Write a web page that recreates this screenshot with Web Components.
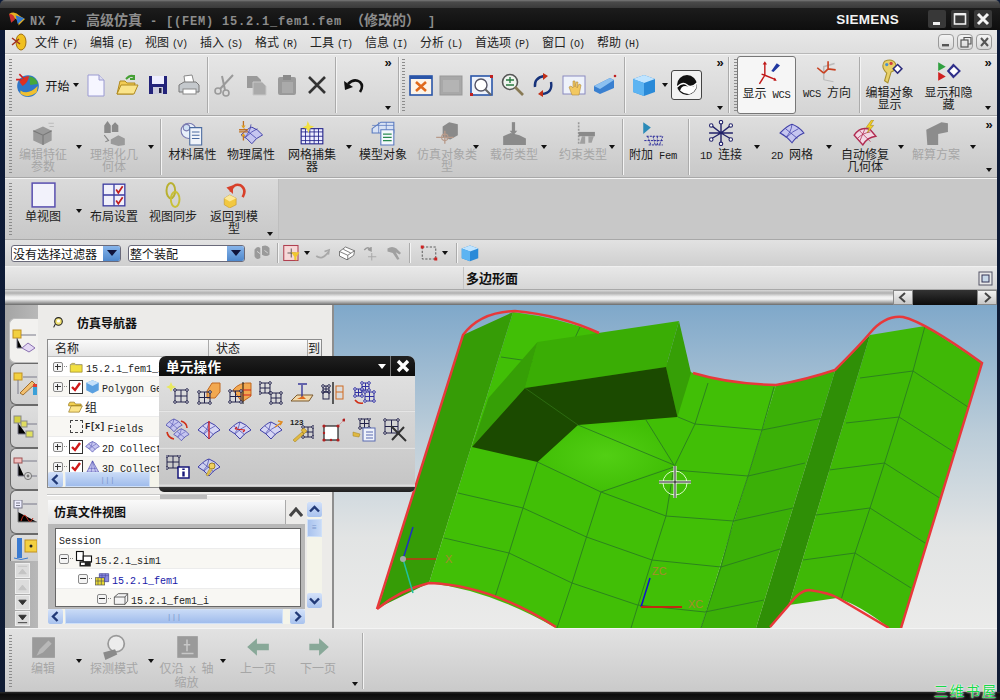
<!DOCTYPE html>
<html lang="zh">
<head>
<meta charset="utf-8">
<title>NX 7</title>
<style>
  html, body { margin: 0; padding: 0; background: #000; }
  body { font: 12px "Noto Sans CJK SC", "Liberation Sans", sans-serif; color: #1a1a1a; overflow: hidden; }
</style>
</head>
<body>

<nx-window>
  <nx-titlebar slot="title" text="NX 7 - 高级仿真 - [(FEM) 15.2.1_fem1.fem （修改的） ]"></nx-titlebar>
  <nx-menubar slot="menu" items="文件(F),编辑(E),视图(V),插入(S),格式(R),工具(T),信息(I),分析(L),首选项(P),窗口(O),帮助(H)"></nx-menubar>

  <nx-toolbar slot="bars" h="62" tone="a">
    <nx-grip></nx-grip>
    <nx-btn icon="start" w="66" size="26" text="开始" drop></nx-btn>
    <nx-btn icon="doc" w="31"></nx-btn><nx-btn icon="folder" w="31"></nx-btn><nx-btn icon="floppy" w="31"></nx-btn><nx-btn icon="printer" w="31"></nx-btn>
    <nx-sep style="margin:2px 1px 2px 3px"></nx-sep>
    <nx-btn icon="scissors" w="31"></nx-btn><nx-btn icon="copy" w="31"></nx-btn><nx-btn icon="paste" w="31"></nx-btn><nx-btn icon="del" w="30"></nx-btn>
    <nx-sep style="margin:2px 2px 2px 3px"></nx-sep>
    <nx-btn icon="undo" w="31"></nx-btn>
    <nx-more style="margin-left:12px"></nx-more>
    <nx-sep style="margin:2px 0 2px 3px"></nx-sep>
    <nx-grip style="margin-left:3px;margin-right:0"></nx-grip>
    <nx-btn icon="fit" w="31"></nx-btn><nx-btn icon="frame" w="30"></nx-btn><nx-btn icon="zoomwin" w="31"></nx-btn><nx-btn icon="zoom" w="31"></nx-btn><nx-btn icon="rotate" w="30"></nx-btn><nx-btn icon="pan" w="31"></nx-btn><nx-btn icon="persp" w="31"></nx-btn>
    <nx-sep style="margin:2px 5px 2px 4px"></nx-sep>
    <nx-btn icon="cube" w="28"></nx-btn><nx-btn w="13" drop></nx-btn>
    <nx-btn icon="shaded" w="31" boxed></nx-btn>
    <nx-more style="margin-left:11px"></nx-more>
    <nx-sep style="margin:2px 0 2px 1px"></nx-sep>
    <nx-grip style="margin-left:5px;margin-right:0"></nx-grip>
    <nx-tool icon="wcs" label="显示 WCS" w="59" active></nx-tool>
    <nx-tool icon="wcsdir" label="WCS 方向" w="62"></nx-tool>
    <nx-sep style="margin:2px 0 2px 1px"></nx-sep>
    <nx-tool icon="editobj" label="编辑对象|显示" w="59"></nx-tool>
    <nx-tool icon="showhide" label="显示和隐|藏" w="59"></nx-tool>
    <nx-more style="margin-left:3px"></nx-more>
  </nx-toolbar>

  <nx-toolbar slot="bars" h="62" tone="b">
    <nx-grip></nx-grip>
    <nx-tool icon="feature" label="编辑特征|参数" w="71" pr="13" ax="65" off></nx-tool>
    <nx-tool icon="ideal" label="理想化几|何体" w="71" pr="13" ax="66" off></nx-tool>
    <nx-sep style="margin:2px 3px 2px 4px"></nx-sep>
    <nx-tool icon="material" label="材料属性" w="57"></nx-tool>
    <nx-tool icon="phys" label="物理属性" w="60"></nx-tool>
    <nx-tool icon="meshcoll" label="网格捕集|器" w="75" pr="13" ax="68"></nx-tool>
    <nx-tool icon="modelobj" label="模型对象" w="54"></nx-tool>
    <nx-tool icon="simobj" label="仿真对象类|型" w="74" ax="66" off></nx-tool>
    <nx-tool icon="load" label="载荷类型" w="66" pr="6" ax="60" off></nx-tool>
    <nx-tool icon="constraint" label="约束类型" w="66" ax="62" off></nx-tool>
    <nx-sep style="margin:2px 1px 2px 6px"></nx-sep>
    <nx-tool icon="fem" label="附加 Fem" w="58"></nx-tool>
    <nx-sep style="margin:2px 2px 2px 6px"></nx-sep>
    <nx-tool icon="oned" label="1D 连接" w="71" pr="11" ax="66"></nx-tool>
    <nx-tool icon="twod" label="2D 网格" w="71" pr="11" ax="67"></nx-tool>
    <nx-tool icon="repair" label="自动修复|几何体" w="75" pr="11" ax="68"></nx-tool>
    <nx-tool icon="solve" label="解算方案" w="70" pr="14" ax="65" off></nx-tool>
    <nx-more style="margin-left:4px"></nx-more>
  </nx-toolbar>

  <nx-toolbar slot="bars" h="62" tone="c">
    <nx-grip></nx-grip>
    <nx-tool icon="single" label="单视图" w="71" pr="13" ax="65" ay="30"></nx-tool>
    <nx-tool icon="layout" label="布局设置" w="58"></nx-tool>
    <nx-tool icon="sync" label="视图同步" w="60"></nx-tool>
    <nx-tool icon="back" label="返回到模|型" w="75" pr="13" ax="67" ay="53"></nx-tool>
  </nx-toolbar>

  <nx-selbar slot="bars">
    <nx-combo text="没有选择过滤器" w="110" style="margin-left:6px"></nx-combo>
    <nx-combo text="整个装配" w="117" style="margin-left:7px"></nx-combo>
    <nx-btn icon="filtgray" w="31" size="20" style="margin-left:1px"></nx-btn>
    <nx-sep style="margin:3px 3px 3px 0"></nx-sep>
    <nx-btn icon="snap" w="22" size="18"></nx-btn><nx-btn w="8" drop></nx-btn>
    <nx-btn icon="s1" w="24" size="18"></nx-btn><nx-btn icon="s2" w="24" size="18"></nx-btn><nx-btn icon="s3" w="24" size="18"></nx-btn><nx-btn icon="s4" w="24" size="18"></nx-btn>
    <nx-sep style="margin:3px 9px 3px 2px"></nx-sep>
    <nx-btn icon="marquee" w="20" size="18"></nx-btn><nx-btn w="12" drop></nx-btn>
    <nx-sep style="margin:3px 3px 3px 5px"></nx-sep>
    <nx-btn icon="cube" w="20" size="18"></nx-btn>
    <nx-arrow style="margin-left:525px;margin-top:12px"></nx-arrow>
  </nx-selbar>

  <nx-cuebar slot="bars" text="多边形面"></nx-cuebar>
  <nx-band slot="bars"></nx-band>

  <nx-main slot="main">
    <nx-tabs slot="side" items="t1,t2,t3,t4,t5,t6"></nx-tabs>
    <nx-navigator slot="side"></nx-navigator>
    <nx-viewport slot="view"></nx-viewport>
    <nx-dialog slot="float" text="单元操作">
      <nx-btn icon="e1" w="31" size="24"></nx-btn><nx-btn icon="e2" w="31" size="24"></nx-btn><nx-btn icon="e3" w="31" size="24"></nx-btn><nx-btn icon="e4" w="31" size="24"></nx-btn><nx-btn icon="e5" w="31" size="24"></nx-btn><nx-btn icon="e6" w="31" size="24"></nx-btn><nx-btn icon="e7" w="31" size="24"></nx-btn><nx-btn w="31"></nx-btn>
      <nx-btn icon="e8" w="31" size="24"></nx-btn><nx-btn icon="e9" w="31" size="24"></nx-btn><nx-btn icon="e10" w="31" size="24"></nx-btn><nx-btn icon="e11" w="31" size="24"></nx-btn><nx-btn icon="e12" w="31" size="24"></nx-btn><nx-btn icon="e13" w="31" size="24"></nx-btn><nx-btn icon="e14" w="31" size="24"></nx-btn><nx-btn icon="e15" w="31" size="24"></nx-btn>
      <nx-btn icon="e16" w="31" size="24"></nx-btn><nx-btn icon="e17" w="31" size="24"></nx-btn>
    </nx-dialog>
  </nx-main>

  <nx-toolbar slot="foot" h="64" tone="d">
    <nx-grip></nx-grip>
    <nx-tool icon="edit" label="编辑" w="71" pr="13" ax="65" ay="28" off></nx-tool>
    <nx-tool icon="probe" label="探测模式" w="71" pr="13" ax="66" ay="28" off></nx-tool>
    <nx-tool icon="axis" label="仅沿 X 轴|缩放" w="68" pr="7" ax="67" ay="28" off></nx-tool>
    <nx-tool icon="prev" label="上一页" w="68" off></nx-tool>
    <nx-tool icon="next" label="下一页" w="52" off></nx-tool>
    <nx-more nomore style="margin-left:4px"></nx-more>
    <nx-sep style="margin:2px 0 2px 0"></nx-sep>
  </nx-toolbar>
  <nx-watermark slot="over" text="三维书屋"></nx-watermark>
</nx-window>

<script>
// 文字里的半角部分换成等宽字体,和原来的宋体差不多宽
const latStyle = `.m{font-family:"Liberation Mono",monospace;font-size:10.5px;letter-spacing:-.3px;white-space:pre}`;
const lat = s => s.replace(/ ?[A-Za-z0-9_.()\[\]\-]+( [A-Za-z0-9_.()\[\]\-]+)* ?/g, m => `<span class="m">${m}</span>`);

// ---- 图标 ----
const grid = (x, y, s = 9, c = '#22224a') =>
  `<g fill="none" stroke="${c}"><rect x="${x}" y="${y}" width="${s}" height="${s}"/><path d="M${x + s / 2} ${y}v${s}M${x} ${y + s / 2}h${s}"/>` +
  [[0, 0], [s, 0], [0, s], [s, s]].map(p => `<circle cx="${x + p[0]}" cy="${y + p[1]}" r="1.3" fill="#fff"/>`).join('') + `</g>`;
const patch = (f = '#c6c6f0', c = '#4040a8') =>
  `<path d="M1 12Q8 5 12 4Q18 6 23 12Q16 15 12 21Q7 15 1 12Z" fill="${f}" stroke="${c}"/><path d="M6 8l11 9M12 4q-1 8-6 12M18 8Q13 10 7 16" fill="none" stroke="${c}" stroke-width=".7"/>`;
const gr = '#9a9a9a';

const ICONS = {
  start: `<circle cx="12" cy="13" r="10" fill="#2f77c8"/><path d="M4 9Q9 3 13 4Q12 10 7 13Z" fill="#e03020"/><path d="M13 4Q20 5 21 11L14 12Z" fill="#46a83a"/><path d="M5 17Q12 22 21 13L20 19Q12 25 5 20Z" fill="#f0c030"/><path d="M8 6L4 2M6 7L1 7" stroke="#d02020" stroke-width="1.5"/>`,
  doc: `<path d="M4 2h11l5 5v16H4Z" fill="#f6f6ff" stroke="#9a9ad2"/><path d="M15 2v5h5" fill="#dde" stroke="#9a9ad2"/>`,
  folder: `<path d="M2 21L5 8h5l2 2h8l-2 11Z" fill="#f2cc55" stroke="#b08a20"/><path d="M2 21L6 12h17l-4 9Z" fill="#fae48a" stroke="#b08a20"/><path d="M11 6Q16 1 19 4M19 2v4h-4" fill="none" stroke="#45a035" stroke-width="2"/>`,
  floppy: `<path d="M3 3h18v18H3Z" fill="#23237a"/><rect x="6" y="3" width="12" height="8" fill="#eef"/><rect x="7" y="14" width="10" height="7" fill="#ccd"/><rect x="13" y="15" width="2.5" height="5" fill="#224"/>`,
  printer: `<path d="M7 3l8-1 2 8H8Z" fill="#fff" stroke="#888"/><path d="M2 12l5-3h12l3 3v7H2Z" fill="#c4c8cc" stroke="#777"/><rect x="6" y="16" width="13" height="5" fill="#fff" stroke="#888"/>`,
  scissors: `<circle cx="5" cy="18" r="3" fill="none" stroke="${gr}" stroke-width="1.6"/><circle cx="13" cy="20" r="3" fill="none" stroke="${gr}" stroke-width="1.6"/><path d="M7 16L20 2M12 17L9 3" stroke="${gr}" stroke-width="2"/>`,
  copy: `<path d="M3 3h10l4 4v8H3Z" fill="${gr}"/><path d="M9 9h9l4 4v9H9Z" fill="#aaa" stroke="#c8c8c8"/>`,
  paste: `<rect x="3" y="4" width="18" height="18" rx="2" fill="${gr}"/><rect x="8" y="2" width="8" height="5" fill="#8a8a8a"/><rect x="7" y="9" width="11" height="11" fill="#aaa"/>`,
  del: `<path d="M4 4L20 20M20 4L4 20" stroke="#333" stroke-width="2.6"/>`,
  undo: `<path d="M6 11Q12 5 18 9Q22 13 18 19" fill="none" stroke="#111" stroke-width="2.6"/><path d="M2 8l1 9 8-3Z" fill="#111"/>`,
  fit: `<rect x="1" y="3" width="22" height="19" fill="#fdf4e8" stroke="#2a55a8" stroke-width="1.6"/><rect x="1" y="3" width="22" height="3" fill="#2a55a8"/><path d="M7 9l10 9M17 9L7 18" stroke="#e06a1c" stroke-width="2.6"/>`,
  frame: `<rect x="1" y="3" width="22" height="19" fill="#a8a8a8" stroke="#999"/><rect x="4" y="7" width="16" height="12" fill="#b4b4b4"/>`,
  zoomwin: `<rect x="1" y="3" width="21" height="19" fill="#eef2fa" stroke="#2a55a8" stroke-width="1.6"/><circle cx="11" cy="12" r="6" fill="#fff" stroke="#556" stroke-width="1.4"/><path d="M15 16l6 6" stroke="#666" stroke-width="2"/><rect x="0" y="20" width="3" height="3" fill="#c02020"/><rect x="20" y="2" width="3" height="3" fill="#c02020"/>`,
  zoom: `<circle cx="9" cy="9" r="7.5" fill="#eef3ee" stroke="#555" stroke-width="1.6"/><path d="M5 7h8M9 4v6M5 12h8" stroke="#2a7a40" stroke-width="1.4"/><path d="M14 14l8 8" stroke="#887a55" stroke-width="2.6"/>`,
  rotate: `<path d="M4 14Q3 5 13 3" fill="none" stroke="#16327a" stroke-width="2.4"/><path d="M20 9Q22 20 11 21" fill="none" stroke="#16327a" stroke-width="2.4"/><path d="M12 0l5 3-5 4ZM12 24l-5-3 5-4Z" fill="#c03018"/>`,
  pan: `<rect x="1" y="3" width="22" height="18" fill="#eef2fa" stroke="#8a8ac0"/><path d="M10 22l-3-8 2-1 2 2V8h2v6l1-5h2l-1 6 2-4 2 1-2 10Z" fill="#f2c860" stroke="#b08a40" stroke-width=".6"/>`,
  persp: `<path d="M1 13L17 5l4 2v8L7 21 1 18Z" fill="#3a80d0"/><path d="M1 13l6 3 14-9-4-2Z" fill="#8cc0f0"/><circle cx="22" cy="3" r="1.3" fill="#c02020"/>`,
  cube: `<path d="M12 2L23 6v13l-11 4L1 19V6Z" fill="#2a8ad8"/><path d="M12 2L23 6 12 10 1 6Z" fill="#bfe4ff"/><path d="M1 6l11 4v13L1 19Z" fill="#5db4f2"/>`,
  shaded: `<circle cx="12" cy="12" r="10" fill="#111"/><path d="M3 8Q8 4 12 10T21 12Q20 6 15 3Q7 1 3 8Z" fill="#fff" transform="rotate(140 12 12)"/><path d="M2 14Q8 8 12 12T22 10" fill="none" stroke="#fff" stroke-width="1.4"/>`,
  wcs: `<path d="M10 15V4M10 15l10 4M10 15l-3-1" stroke="#c01818" stroke-width="1.3" fill="none"/><path d="M10 15L5 23" stroke="#c01818" stroke-width="1.3"/><path d="M16 11l5-7 3 2-6 6Z" fill="#2038a0"/><path d="M8 5l2-3 2 3ZM18 20l3 0-2-3Z" fill="#c01818"/>`,
  wcsdir: `<path d="M9 20V8l10-3" stroke="#bbb" stroke-width="1.4" fill="none"/><path d="M9 20l9 2" stroke="#bbb"/><path d="M9 14l4-4 7 1M13 10V3M9 14L3 9" stroke="#c84020" stroke-width="1.5" fill="none"/>`,
  editobj: `<path d="M7 3Q14 0 17 5Q19 11 13 13L10 23 7 21 9 14Q3 8 7 3Z" fill="#e8d068" stroke="#a89030"/><circle cx="9" cy="6" r="1.5" fill="#4890d0"/><circle cx="13" cy="5" r="1.5" fill="#d04040"/><path d="M14 10l5-5 5 5-5 5Z" fill="#2a2a7a"/><path d="M16 10l3-3 3 3-3 3Z" fill="#fff"/>`,
  showhide: `<path d="M2 4v8l7-4Z" fill="#30a040"/><path d="M2 13v8l7-4Z" fill="#d02020"/><path d="M10 12l6-7 7 7-7 7Z" fill="#30308a"/><path d="M12.5 12l4-4 4 4-4 4Z" fill="#fff"/>`,
  feature: `<path d="M3 10l9-4 8 4v9l-8 4-9-4Z" fill="${gr}"/><path d="M3 10l9 4 8-4M12 14v9" stroke="#777" fill="none"/><path d="M17 3h5M18 6h4" stroke="#bbb"/>`,
  ideal: `<path d="M3 5l3-4 3 4v7H3ZM10 5l3-3 3 3v6h-6Z" fill="#8a8a8a"/><path d="M9 18l7-4 6 3v6l-6 1-7-2Z" fill="${gr}"/><path d="M3 14l4 5-3 1" fill="none" stroke="#888"/>`,
  material: `<circle cx="8" cy="10" r="7" fill="#e8f0fa" stroke="#7a7ab0"/><circle cx="6" cy="7" r="3" fill="#cfe0f4" stroke="#7a7ab0"/><path d="M9 7h11v16H9Z" fill="#f0f4fa" stroke="#4a6aa0"/><path d="M11 11h7M11 14h7M11 17h7" stroke="#4a6aa0"/>`,
  phys: patch().replace('<path', '<path transform="translate(2 3) scale(.9)"') + `<path d="M5 1v5M5 14v5M1 9h8M1 11h8" stroke="#c07020" stroke-width="1.2"/><path d="M3 5h4l-2 3ZM3 15h4l-2-3Z" fill="#e0a020"/>`,
  meshcoll: `<rect x="2" y="8" width="20" height="14" fill="#eef" stroke="#22228a"/><path d="M2 11h20M2 15h20M2 19h20M6 8v14M10 8v14M14 8v14M18 8v14" stroke="#22228a" stroke-width=".8"/><path d="M8 1l2 4 4 1-4 2-1 4-2-4-4-1 4-2Z" fill="#f2e040"/>`,
  modelobj: `<path d="M2 8l8-6h12v10H2Z" fill="#d8e2f4" stroke="#5a7ac0"/><path d="M2 5h20M8 2v10M15 2v10" stroke="#5a7ac0" stroke-width=".7"/><path d="M10 9h12v14H10Z" fill="#f4f8fc" stroke="#5a7ac0"/><path d="M12 13h8M12 16h8M12 19h8" stroke="#2a8a50"/>`,
  simobj: `<path d="M8 6l6-4 8 2v10l-7 4-7-2Z" fill="#8a8a8a"/><path d="M2 16h16M10 10v12" stroke="#b89a8a" stroke-width="1.2"/><circle cx="10" cy="16" r="3" fill="none" stroke="#b89a8a"/>`,
  load: `<path d="M2 23v-8l7-3 8 2 6 3v6Z" fill="#8a8a8a"/><path d="M10 2h3v9h-3Z" fill="#8a8a8a"/><path d="M8 10l3.5 4 3.5-4Z" fill="#8a8a8a"/>`,
  constraint: `<path d="M8 2v20" stroke="#999" stroke-width="1.5" stroke-dasharray="2 1"/><path d="M8 11h15v4H8Z" fill="#8a8a8a"/><path d="M11 15l-2 7h5v-7ZM17 15h5l-2 6h-3Z" fill="#a0a0a0"/>`,
  fem: `<path d="M3 2l7 5-7 6Z" fill="#2a8ab8"/><path d="M4 19h18M6 15h15M8 23h13M7 15l3 8M12 15l2 8M16 15v8M21 15l-3 8" stroke="#2a2a9a" stroke-width=".9" stroke-dasharray="2 1"/>`,
  oned: `<path d="M12 12L12 1M12 12L12 23M12 12L3 5M12 12L21 5M12 12L2 18M12 12L22 18M12 12L1 12M12 12L23 12" stroke="#22226a" stroke-width="1.3"/><g fill="#fff" stroke="#22226a">` + [[12, 2], [12, 22], [3, 5], [21, 5], [3, 18], [21, 18]].map(p => `<circle cx="${p[0]}" cy="${p[1]}" r="1.6"/>`).join('') + `</g>`,
  twod: patch(),
  repair: `<path d="M2 14Q8 5 17 9L22 15Q14 16 10 23Z" fill="#f2d8e4" stroke="#b02a50" stroke-width="1.3"/><path d="M7 10l10 10M12 8l-5 12M17 11q-7 1-12 6" stroke="#b02a50" stroke-width=".7" fill="none"/><path d="M18 0l-5 7h3l-2 5 6-7h-3l3-5Z" fill="#f2d020" stroke="#a08020" stroke-width=".5"/>`,
  solve: `<path d="M3 9l14-7 6 1v8l-9 2v10H4Z" fill="#8c8c8c"/>`,
  single: `<rect x="2" y="1" width="21" height="22" fill="#f2f2fb" stroke="#5a50b0" stroke-width="1.4"/>`,
  layout: `<rect x="2" y="2" width="20" height="20" fill="#f0f0fb" stroke="#3a3aa0" stroke-width="1.2"/><path d="M2 12h20M12 2v20" stroke="#3a3aa0" stroke-width="1.2"/><path d="M14 7l2 3 4-6M14 17l2 3 4-6" fill="none" stroke="#c02020" stroke-width="1.6"/>`,
  sync: `<ellipse cx="10" cy="8" rx="4" ry="7" fill="none" stroke="#b8b030" stroke-width="1.8"/><ellipse cx="14" cy="16" rx="4" ry="7" fill="none" stroke="#c8c038" stroke-width="1.8"/>`,
  back: `<path d="M9 9Q11 1 18 3Q24 7 20 14" fill="none" stroke="#d8402a" stroke-width="2.4"/><path d="M5 5l6-2 0 8Z" fill="#d8402a"/><path d="M3 15l5-3 6 3v6l-6 3-5-3Z" fill="#f2c840" stroke="#c09020" stroke-width=".5"/><path d="M3 15l5 3 6-3-6-3Z" fill="#fbe89a"/>`,
  filtgray: `<path d="M3 8q3-5 7-2v12q-5 3-7-2ZM12 4q6-3 9 2v8q-4 3-9 0Z" fill="#9a9a9a"/><path d="M6 10l4 3M15 9l4 3" stroke="#ddd"/>`,
  snap: `<rect x="1" y="2" width="19" height="20" fill="#f6d8d8" stroke="#b04050" stroke-width="1.4"/><path d="M6 12h11M11 6v12" stroke="#333"/><path d="M11 11l11 0-4 6v5l-3-1v-4Z" fill="#f0c830"/>`,
  s1: `<path d="M3 16q8 6 16-5M14 10l6-2-1 6" fill="none" stroke="#a8a8a8" stroke-width="2.4"/>`,
  s2: `<path d="M2 10l8-6 12 5-1 6-9 6-10-5Z" fill="#fff" stroke="#555"/><path d="M2 10l11 5 9-6M13 15v6M7 7l10 5" fill="none" stroke="#555"/>`,
  s3: `<path d="M3 8q5-6 9 0M12 4l0 5-4-2" fill="none" stroke="#999" stroke-width="2"/><path d="M13 12v10M8 17h11" stroke="#aaa" stroke-width="1.4"/>`,
  s4: `<path d="M2 6q6-4 12 0l6 6-2 2-5-3 5 9-3 1-6-9-7-2Z" fill="#a0a0a0"/>`,
  marquee: `<rect x="3" y="4" width="18" height="16" fill="none" stroke="#333" stroke-dasharray="3 2"/><rect x="1" y="2" width="4" height="4" fill="#d02020"/><rect x="19" y="18" width="4" height="4" fill="#d02020"/>`,
  edit: `<rect x="2" y="3" width="21" height="19" fill="#9a9a9a"/><path d="M6 20l3-6 8-8 3 3-8 8Z" fill="#b8b8b8"/>`,
  probe: `<circle cx="14" cy="9" r="7.5" fill="#ececec" stroke="#999" stroke-width="1.6"/><path d="M2 17l11-3 2 5-11 5Z" fill="#8a8a8a"/>`,
  axis: `<rect x="3" y="2" width="19" height="20" fill="#9a9a9a"/><path d="M12 5v11M7 18h11M9 10h6" stroke="#c8c8c8" stroke-width="1.4"/>`,
  prev: `<path d="M2 12l9-8v5h11v6H11v5Z" fill="#88a898"/>`,
  next: `<path d="M22 12l-9-8v5H4v6h9v5Z" fill="#88a898"/>`,
  // 单元操作对话框
  e1: `<path d="M5 1l1.5 3.5L10 6 6.5 7.5 5 11 3.5 7.5 0 6l3.5-1.5Z" fill="#e8e860"/>` + grid(9, 9, 12),
  e2: `<path d="M10 10l5-8h8v9l-5 6h-8Z" fill="#f2a850" stroke="#c06820"/>` + grid(2, 11, 11),
  e3: `<path d="M5 9q6-8 18-7v13l-9 6Z" fill="#f2a850" stroke="#c06820"/><path d="M15 1v22" stroke="#111"/><path d="M15 9h8M15 14h8" stroke="#d02020"/>` + grid(2, 10, 11),
  e4: grid(1, 2, 10) + grid(12, 12, 10),
  e5: `<path d="M1 20l6-6h16l-4 6Z" fill="#f2d8a8" stroke="#7a5a30"/><path d="M8 3h9M12 4v12" stroke="#3a3a9a" stroke-width="1.4"/><path d="M7 18h9l-3-3Z" fill="#e06a1c"/>`,
  e6: grid(2, 5, 6) + `<path d="M12 1v22" stroke="#111" stroke-width="1.3"/><g fill="none" stroke="#d06a20"><rect x="15" y="5" width="7" height="13"/><path d="M15 11h7"/></g><rect x="2" y="11" width="6" height="7" fill="none" stroke="#22224a"/>`,
  e7: grid(10, 2, 7, '#3030a0') + grid(13, 11, 9, '#3030a0') + grid(3, 8, 7, '#3030a0') + `<path d="M3 19q3 4 8 3" fill="none" stroke="#d03018" stroke-width="1.5"/>`,
  e8: `<g transform="translate(-1 -2) scale(.75)">${patch()}</g><g transform="translate(7 8) scale(.7)">${patch()}</g><path d="M15 3q6 2 6 7M1 14q1 6 7 7" fill="none" stroke="#d03018" stroke-width="1.6"/>`,
  e9: patch('#d6d6f4') + `<path d="M12 3v18" stroke="#d02020" stroke-width="1.4"/>`,
  e10: patch('#d6d6f4') + `<path d="M7 11l10 1M7 11l2-2M17 12l-2 2" stroke="#d02020" stroke-width="1.2" fill="none"/>`,
  e11: patch('#d6d6f4') + `<path d="M16 9l6-4M19 3l4 1-2 3" stroke="#e08a20" stroke-width="1.5" fill="none"/>`,
  e12: `<text x="0" y="7" font-size="8" font-family="Liberation Sans" font-weight="bold" fill="#222">123</text>` + grid(13, 9, 10) + `<path d="M3 22l9-8 2 2-9 8ZM11 12l3-2 3 3-3 3Z" fill="#e0b840" stroke="#a08020" stroke-width=".5"/>`,
  e13: `<rect x="3" y="8" width="14" height="14" fill="#fff" stroke="#222" stroke-width="1.2"/><path d="M17 8L23 2" stroke="#d8a0a0"/><g fill="#b02020"><circle cx="23" cy="2" r="1.6"/><circle cx="17" cy="8" r="1.6"/><circle cx="3" cy="8" r="1.6"/><circle cx="3" cy="22" r="1.6"/><circle cx="17" cy="22" r="1.6"/><circle cx="10" cy="22" r="1.2"/><circle cx="3" cy="15" r="1.2"/></g>`,
  e14: grid(8, 1, 9) + `<rect x="11" y="10" width="12" height="13" fill="#eef2fa" stroke="#5a6ab0"/><path d="M14 14h7M14 17h7M14 20h7" stroke="#5a6ab0"/><path d="M1 14l7 2-1 3-6-1Z" fill="#e0b840" stroke="#a08020" stroke-width=".5"/>`,
  e15: grid(2, 2, 13) + `<path d="M8 8L23 23M21 9L9 22" stroke="#333" stroke-width="2"/>`,
  e16: grid(1, 1, 12) + `<rect x="12" y="12" width="11" height="11" fill="#fff" stroke="#16167a" stroke-width="1.5"/><path d="M17.5 13.5v1.5M17.5 16.5v5" stroke="#16167a" stroke-width="2.4"/>`,
  e17: patch('#cdd0ee') + `<circle cx="15" cy="11" r="3" fill="#f0d060" stroke="#a08020"/><path d="M13 13l-4 7 2 1 4-6" fill="#e0c050" stroke="#a08020" stroke-width=".5"/>`,
  // 左侧标签
  t1: `<rect x="1" y="1" width="8" height="8" fill="#f2d040" stroke="#c09020"/><path d="M5 9v10h5M9 6h15" stroke="#7a7a8a"/><path d="M10 19l6-5 7 5-6 4Z" fill="#e4d8f4" stroke="#8a70b0"/>`,
  t2: `<rect x="1" y="1" width="8" height="7" fill="#f2d040" stroke="#c09020"/><path d="M5 8v14M10 5h14" stroke="#7a7a8a"/><path d="M7 21L19 9l3 3L10 23Z" fill="#f2c070" stroke="#a07030"/><path d="M20 12h4v11h-4Z" fill="#3aa0d8"/><path d="M20 12h4v3h-4Z" fill="#e04030"/>`,
  t3: `<rect x="1" y="1" width="7" height="7" fill="#d4d040" stroke="#888"/><rect x="8" y="6" width="6" height="6" fill="#e0dc60" stroke="#888"/><path d="M5 8v11h8M14 9h10" stroke="#7a7a8a"/><rect x="13" y="16" width="7" height="6" fill="#e0e060" stroke="#888"/>`,
  t4: `<rect x="1" y="1" width="8" height="5" fill="#f0c0c0" stroke="#a05050"/><path d="M5 6v13h6M9 4h15M19 19h5" stroke="#7a7a8a"/><circle cx="15" cy="19" r="3.6" fill="none" stroke="#777"/><circle cx="15" cy="19" r="1.4" fill="#777"/>`,
  t5: `<rect x="1" y="0" width="8" height="8" fill="#eef" stroke="#778"/><path d="M3 3h4M3 5.5h4M5 8v4M10 4h14" stroke="#778"/><path d="M5 12v10h19" stroke="#888"/><path d="M8 21q3-10 6-3t6 0" fill="none" stroke="#c03020"/>`,
  t6: `<rect x="4" y="2" width="5" height="20" fill="#3a7ad0"/><path d="M1 22q7 3 14 0" stroke="#3a7ad0" fill="none"/><rect x="12" y="4" width="12" height="12" fill="#f4d040" stroke="#c09020"/><circle cx="18" cy="10" r="1.5" fill="#222"/>`,
  // 树上的小图标
  tfolder: `<path d="M2 9l3-2h4l2 2h10v12H2Z" fill="#f2e040" stroke="#8a7a20"/><path d="M2 9h19" stroke="#999"/>`,
  tcube: `<path d="M12 2L22 6v12l-10 5L2 18V6Z" fill="#5ba0e0"/><path d="M12 2L22 6 12 11 2 6Z" fill="#c4e0fa"/>`,
  tgroup: `<path d="M1 8l2-3h7l2 3h9v3H1Z" fill="#f2d050" stroke="#8a6a10"/><path d="M1 21l4-10h18l-5 10Z" fill="#fbe488" stroke="#8a6a10"/>`,
  tcoll2: patch(),
  tcoll3: `<path d="M12 3L22 21H3Z" fill="#c6c6f0" stroke="#4040a8"/><path d="M12 3l-2 18M12 3l5 18M6 15h12" stroke="#4040a8" stroke-width=".7"/>`,
  tsim: `<rect x="2" y="2" width="9" height="12" fill="#fff" stroke="#111" stroke-width="1.5"/><rect x="11" y="8" width="11" height="8" fill="#fff" stroke="#111" stroke-width="1.5"/><rect x="6" y="15" width="15" height="7" fill="#222"/><rect x="8" y="17" width="5" height="3" fill="#fff"/>`,
  tfem: `<rect x="2" y="10" width="14" height="11" fill="#e8d830" stroke="#555"/><path d="M6 10v11M11 10v11M2 15h14" stroke="#555"/><path d="M8 4h14v12h-6V10H8Z" fill="#8a8ae0" stroke="#3a3a90"/><path d="M12 4v6M17 4v6M8 7h14" stroke="#3a3a90" stroke-width=".7"/>`,
  tbox: `<path d="M2 9l6-5h14v11l-4 5H2Z" fill="#f4f4f4" stroke="#444" stroke-width="1.2"/><path d="M2 9h16v11M18 9l4-5" fill="none" stroke="#444" stroke-width="1.2"/>`,
  tpin: `<circle cx="12" cy="10" r="7" fill="#f0e070" stroke="#222" stroke-width="2"/><circle cx="12" cy="9" r="3" fill="#fff"/><path d="M6 15l-3 6" stroke="#222" stroke-width="2"/>`
};

class NxIcon extends HTMLElement {
  connectedCallback() {
    const s = this.getAttribute('size') || 24;
    this.attachShadow({ mode: 'open' }).innerHTML = `<style>:host{display:block;line-height:0}</style>
      <svg viewBox="0 0 24 24" width="${s}" height="${s}">${ICONS[this.getAttribute('name')] || ''}</svg>`;
  }
}

// ---- 窗口骨架 ----
class NxWindow extends HTMLElement {
  connectedCallback() {
    this.attachShadow({ mode: 'open' }).innerHTML = `<style>
      :host { display:flex; flex-direction:column; width:1000px; height:700px; background:linear-gradient(#0c1a38,#101c34); overflow:hidden; position:relative; }
      .frame { flex:none; display:flex; flex-direction:column; margin:0 3px 0 5px; }
      .cap { height:8px; flex:none; background:linear-gradient(#7a7a7a,#4a4a4a 25%,#3a3a3a); border-radius:5px 5px 0 0; }
      .bars { display:flex; flex-direction:column; }
      .bottom { flex:1; background:linear-gradient(#2a2a2a,#0c0c0c 30%,#181818); }
    </style>
    <div class="cap"></div>
    <slot name="title"></slot>
    <div class="frame">
      <slot name="menu"></slot>
      <div class="bars"><slot name="bars"></slot></div>
      <slot name="main"></slot>
      <slot name="foot"></slot>
    </div>
    <div class="bottom"></div>
    <slot name="over"></slot>`;
  }
}

class NxTitlebar extends HTMLElement {
  connectedCallback() {
    const t = this.getAttribute('text').replace(/[A-Za-z0-9_.()\[\]\- ]+/g, m => `<span class="l">${m}</span>`);
    const b = (inner, cl = '') => `<span class="b ${cl}"><svg width="18" height="18" viewBox="0 0 18 18">${inner}</svg></span>`;
    this.attachShadow({ mode: 'open' }).innerHTML = `<style>
      :host { display:flex; align-items:center; height:22px; background:linear-gradient(#1c1c1c,#0e0e0e); padding:0 8px 0 8px; flex:none; }
      .t { color:#8c8c8c; font:bold 14px "Noto Sans CJK SC","Liberation Sans",sans-serif; margin-left:4px; white-space:pre; }
      .l { font:bold 12px "Liberation Mono",monospace; letter-spacing:.8px; }
      .s { margin-left:auto; color:#f2f2f2; font:bold 13.5px "Liberation Sans",sans-serif; letter-spacing:.3px; margin-right:24px; }
      .b { display:inline-flex; width:18px; height:18px; margin-left:5px; background:#383838; border-radius:2px; line-height:0; }
    </style>
    <svg width="18" height="16" viewBox="0 0 24 22"><path d="M1 4q8-5 15 3l7 4-9 9q1-8-6-10Z" fill="#e8b020"/><path d="M1 4q8 0 8 8L4 16Z" fill="#d03030"/><path d="M10 6l12 4-9 8Z" fill="#2f77d0"/></svg>
    <span class="t">${t}</span>
    <span class="s">SIEMENS</span>
    ${b('<rect x="5" y="12" width="7" height="3" fill="#eee"/>')}${b('<rect x="3.5" y="4" width="11" height="10" fill="none" stroke="#eee" stroke-width="1.6"/><rect x="3.5" y="3" width="11" height="2.4" fill="#eee"/>')}${b('<path d="M4 4l10 10M14 4L4 14" stroke="#f4f4f4" stroke-width="3"/>')}`;
  }
}

class NxMenubar extends HTMLElement {
  connectedCallback() {
    const items = this.getAttribute('items').split(',').map(i => `<span class="i">${lat(i)}</span>`).join('');
    const b = d => `<span class="b"><svg width="16" height="16" viewBox="0 0 16 16">${d}</svg></span>`;
    this.attachShadow({ mode: 'open' }).innerHTML = `<style>
      ${latStyle}
      :host { display:flex; align-items:center; height:24px; background:linear-gradient(#e8e8e8,#dedede); border-bottom:1px solid #b8b8b8; box-sizing:border-box; padding-left:6px; flex:none; }
      .logo { margin-right:8px; line-height:0; }
      .i { margin-right:15px; white-space:nowrap; color:#222; width:40px; flex:none; }
      .i .m { margin-left:3px; font-size:10px; letter-spacing:-1px; }
      .wide { width:52px; }
      .r { margin-left:auto; display:flex; gap:3px; padding-right:5px; }
      .b { width:16px; height:16px; border:1px solid #9a9a9a; border-radius:4px; background:linear-gradient(#f4f4f4,#d8d8d8); line-height:0; box-sizing:border-box; overflow:hidden; }
    </style>
    <span class="logo"><svg width="16" height="18" viewBox="0 0 16 18"><ellipse cx="10" cy="9" rx="5" ry="8" fill="#f0c020" stroke="#a07010"/><path d="M1 5l8 6M1 12l7-6" stroke="#a03020" stroke-width="1.5"/></svg></span>
    ${items.replace('<span class="i">首选项', '<span class="i wide">首选项')}
    <span class="r">${b('<rect x="3" y="9" width="7" height="2.4" fill="#555"/>')}${b('<rect x="3" y="5" width="7" height="7" fill="none" stroke="#555" stroke-width="1.2"/><path d="M6 5V2.5h7V9h-3" fill="none" stroke="#555" stroke-width="1.2"/>')}${b('<path d="M4 3l7 8M11 3l-7 8" stroke="#555" stroke-width="2"/>')}</span>`;
  }
}

class NxToolbar extends HTMLElement {
  connectedCallback() {
    const tones = { a: '#e6e6e6,#d4d4d4', b: '#dedede,#c8c8c8', c: '#dadada,#c8c8c8', d: '#e2e2e2,#cacaca' };
    const h = this.getAttribute('h');
    const tone = this.getAttribute('tone');
    // 第三排工具条只到 278,右边是空的灰底
    this.attachShadow({ mode: 'open' }).innerHTML = `<style>
      :host { display:flex; height:${h}px; box-sizing:border-box; flex:none; position:relative;
        ${tone === 'd' ? 'padding-top:2px;' : ''}
        background:${tone === 'c' ? `linear-gradient(90deg,transparent 273px,#b4b4b4 273px,#c8c8c8 274px),` : ''}linear-gradient(${tones[tone]});
        border-top:1px solid #f4f4f4; border-bottom:1px solid #a8a8a8; }
    </style><slot></slot>`;
  }
}

class NxGrip extends HTMLElement {
  connectedCallback() {
    this.attachShadow({ mode: 'open' }).innerHTML = `<style>
      :host { display:block; flex:none; width:3px; margin:4px 2px 4px 4px; background:repeating-linear-gradient(#8c8c8c 0 1px,transparent 1px 3px); }
    </style>`;
  }
}

class NxSep extends HTMLElement {
  connectedCallback() {
    this.attachShadow({ mode: 'open' }).innerHTML = `<style>
      :host { display:block; flex:none; width:1px; background:#ababab; box-shadow:1px 0 0 #f4f4f4; }
    </style>`;
  }
}

class NxArrow extends HTMLElement {
  connectedCallback() {
    this.attachShadow({ mode: 'open' }).innerHTML = `<style>
      :host { display:block; flex:none; width:0; height:0; border:3px solid transparent; border-top:4px solid #111; border-bottom:0; }
    </style>`;
  }
}

class NxMore extends HTMLElement {
  connectedCallback() {
    const top = this.hasAttribute('nomore') ? '<i></i>' : '<b>»</b>';
    this.attachShadow({ mode: 'open' }).innerHTML = `<style>
      :host { display:flex; flex:none; flex-direction:column; align-items:center; justify-content:space-between; width:14px; padding:1px 0 5px; box-sizing:border-box; }
      b { font:bold 13px/13px "Liberation Sans",sans-serif; color:#111; }
    </style>${top}<nx-arrow></nx-arrow>`;
  }
}

// 小按钮:只有图标,可带文字和下拉箭头
class NxBtn extends HTMLElement {
  connectedCallback() {
    const a = n => this.getAttribute(n);
    const icon = a('icon') ? `<nx-icon name="${a('icon')}" size="${a('size') || 24}"></nx-icon>` : '';
    const text = a('text') ? `<span>${a('text')}</span>` : '';
    const drop = this.hasAttribute('drop') ? `<nx-arrow></nx-arrow>` : '';
    this.attachShadow({ mode: 'open' }).innerHTML = `<style>
      :host { display:flex; flex:none; align-items:center; justify-content:center; gap:3px; width:${a('w')}px; box-sizing:border-box;
        ${this.hasAttribute('boxed') ? 'background:#f2f2f2;border:1px solid #444;border-radius:3px;height:30px;align-self:center;margin-top:-1px;' : ''} }
      span { font-size:12px; color:#111; white-space:nowrap; margin-left:1px; }
    </style>${icon}${text}${drop}`;
  }
}

// 大按钮:图标在上,文字在下
class NxTool extends HTMLElement {
  connectedCallback() {
    const a = n => this.getAttribute(n);
    const off = this.hasAttribute('off');
    const active = this.hasAttribute('active');
    const label = lat(a('label')).replace(/\|/g, '<br>');
    const arrow = a('ax') ? `<nx-arrow style="position:absolute;left:${a('ax') - 3}px;top:${a('ay') || 28}px"></nx-arrow>` : '';
    this.attachShadow({ mode: 'open' }).innerHTML = `<style>
      ${latStyle}
      :host { display:block; flex:none; position:relative; width:${a('w')}px; box-sizing:border-box; padding:3px ${a('pr') || 0}px 0 0; text-align:center; color:${off ? '#a6a6a6' : '#1c1c1c'};
        ${active ? 'background:#f6f6f6;border:1px solid #777;border-radius:3px;margin:1px 0;padding-top:2px;' : ''} }
      nx-icon { width:26px; margin:0 auto 2px; display:block; }
      .l { display:block; font-size:12px; line-height:12px; white-space:nowrap; }
    </style><nx-icon name="${a('icon')}" size="26"></nx-icon><span class="l">${label}</span>${arrow}`;
  }
}

class NxCombo extends HTMLElement {
  connectedCallback() {
    const w = this.getAttribute('w');
    this.attachShadow({ mode: 'open' }).innerHTML = `<style>
      :host { display:flex; flex:none; align-items:center; width:${w}px; height:17px; align-self:center; box-sizing:border-box; border:1px solid #6a6a7a; border-radius:3px; background:#fff; overflow:hidden; font-size:12px; color:#111; }
      span { flex:1; padding-left:1px; white-space:nowrap; line-height:15px; }
      i { display:flex; align-items:center; justify-content:center; width:17px; height:100%; background:linear-gradient(#86b4ea,#4f88cc); }
      i::after { content:""; border:5px solid transparent; border-top:6px solid #10143a; border-bottom:0; }
    </style><span>${this.getAttribute('text')}</span><i></i>`;
  }
}

class NxSelbar extends HTMLElement {
  connectedCallback() {
    this.attachShadow({ mode: 'open' }).innerHTML = `<style>
      :host { display:flex; height:27px; flex:none; box-sizing:border-box; background:linear-gradient(#e2e2e2,#cfcfcf); border-bottom:1px solid #f0f0f0; }
    </style><slot></slot>`;
  }
}

class NxCuebar extends HTMLElement {
  connectedCallback() {
    this.attachShadow({ mode: 'open' }).innerHTML = `<style>
      :host { display:flex; align-items:center; height:23px; flex:none; box-sizing:border-box; background:linear-gradient(#e8e8e8,#d6d6d6); border-bottom:1px solid #a8a8a8; padding-left:458px; }
      b { font-size:13px; border-left:1px solid #c4c4c4; padding-left:2px; line-height:22px; color:#111; }
      svg { margin-left:auto; margin-right:4px; }
    </style><b>${this.getAttribute('text')}</b>
    <svg width="15" height="15" viewBox="0 0 15 15"><rect x="1" y="1" width="13" height="13" fill="#e8e8e8" stroke="#556"/><rect x="4" y="4" width="7" height="7" fill="#c8d8e8" stroke="#335"/></svg>`;
  }
}

class NxBand extends HTMLElement {
  connectedCallback() {
    const btn = d => `<span class="b"><svg width="14" height="13" viewBox="0 0 14 13"><path d="${d}" fill="none" stroke="#444" stroke-width="2"/></svg></span>`;
    this.attachShadow({ mode: 'open' }).innerHTML = `<style>
      :host { display:flex; justify-content:flex-end; height:15px; flex:none; box-sizing:border-box; background:linear-gradient(#d8d8d8,#b0b0b0 20%,#eeeeee 45%,#f4f4f4 60%,#a0a0a0 85%,#6a6a6a); }
      .b { display:flex; align-items:center; justify-content:center; width:20px; background:linear-gradient(#f2f2f2,#c8c8c8); border:1px solid #888; box-sizing:border-box; }
      .d { width:64px; background:linear-gradient(#333,#0c0c0c); }
    </style>${btn('M9 2L4 6.5 9 11')}<span class="d"></span>${btn('M5 2l5 4.5L5 11')}`;
  }
}

// ---- 主区域 ----
class NxMain extends HTMLElement {
  connectedCallback() {
    this.attachShadow({ mode: 'open' }).innerHTML = `<style>
      :host { display:flex; position:relative; height:323px; flex:none; overflow:hidden; }
      .side { display:flex; flex:none; border-right:2px solid #8e8e8e; box-sizing:content-box; width:327px; background:#ecebe9; }
      .view { flex:1; min-width:0; }
      .float { position:absolute; left:154px; top:51px; }
    </style>
    <div class="side"><slot name="side"></slot></div>
    <div class="view"><slot name="view"></slot></div>
    <div class="float"><slot name="float"></slot></div>`;
  }
}

class NxTabs extends HTMLElement {
  connectedCallback() {
    const names = this.getAttribute('items').split(',');
    const heights = [45, 42, 43, 42, 44, 27];
    const tabs = names.map((n, i) => `<div class="t ${i === 0 ? 'on' : ''} ${i === 5 ? 'last' : ''}" style="height:${heights[i]}px"><nx-icon name="${n}" size="24"></nx-icon></div>`).join('');
    const mini = ['M2 2h10M3 10l4-5 4 5Z', 'M3 10l4-5 4 5Z', 'M3 4h8l-4 5Z', 'M2 11h10M3 3h8L7 8Z'];
    const fill = [1, 1, 0, 0];
    const btns = mini.map((d, i) => `<span class="mb"><svg width="14" height="13" viewBox="0 0 14 13"><path d="${d}" fill="${fill[i] ? '#c4c4c4' : '#333'}" stroke="${fill[i] ? '#c4c4c4' : '#333'}"/></svg></span>`).join('');
    this.attachShadow({ mode: 'open' }).innerHTML = `<style>
      :host { display:flex; flex-direction:column; flex:none; width:33px; background:linear-gradient(90deg,#a4a4a4,#b8b8b8); padding-top:13px; box-sizing:border-box; align-items:flex-end; }
      .t { width:28px; box-sizing:border-box; border:1px solid #6a6a6a; border-right:0; border-radius:6px 0 0 6px; background:linear-gradient(#dedede,#cfcfcf); display:flex; align-items:center; justify-content:flex-start; padding-left:2px; overflow:hidden; flex:none; }
      .on { background:#f2f1ef; width:29px; border-color:#bbb; }
      .last { border-radius:6px 0 0 0; border-bottom:0; }
      .mini { align-self:flex-start; margin:2px 0 0 10px; display:flex; flex-direction:column; gap:1px; }
      .mb { display:flex; width:15px; height:15px; align-items:center; justify-content:center; background:#dcdcdc; border:1px solid #eee; box-sizing:border-box; }
    </style>${tabs}<div class="mini">${btns}</div>`;
  }
}

class NxScroll extends HTMLElement {
  connectedCallback() {
    const a = n => this.getAttribute(n);
    const vert = a('dir') === 'v';
    const ch = (d) => `<span class="c"><svg width="13" height="13" viewBox="0 0 13 13"><path d="${d}" fill="none" stroke="#223a78" stroke-width="2.4"/></svg></span>`;
    const prev = vert ? 'M2 8.5l4.5-4.5 4.5 4.5' : 'M8.5 2L4 6.5l4.5 4.5';
    const next = vert ? 'M2 4.5L6.5 9 11 4.5' : 'M4.5 2L9 6.5 4.5 11';
    const thumb = a('thumb');
    this.attachShadow({ mode: 'open' }).innerHTML = `<style>
      :host { display:flex; flex:none; ${vert ? 'flex-direction:column;width:15px;' : 'height:15px;'} background:#f4f4ea; }
      .c { flex:none; width:15px; height:15px; background:linear-gradient(#d4e2fa,#a8c2ee); border-radius:2px; display:flex; align-items:center; justify-content:center; }
      .tr { flex:1; display:flex; padding:${vert ? '2px 0' : '0 2px'}; min-${vert ? 'height' : 'width'}:0; }
      .th { ${vert ? `height:${thumb}px;width:100%` : `width:${thumb}px;height:100%`}; box-sizing:border-box; border:1px solid #cfe0f8; background:${vert ? 'linear-gradient(90deg,#a8c2ee,#c8daf6)' : 'linear-gradient(#c8daf6,#a0bcec)'}; display:flex; align-items:center; justify-content:center; color:#7a96cc; font:8px/1 "Liberation Mono",monospace; }
    </style>${ch(prev)}<span class="tr"><span class="th">${vert ? '≡' : '|||'}</span></span>${ch(next)}`;
  }
}

// 树的一行
class NxRow extends HTMLElement {
  connectedCallback() {
    const a = n => this.getAttribute(n);
    const ex = a('ex');
    const exp = ex ? `<span class="ex">${ex === '+' ? '<i></i><u></u>' : '<i></i>'}</span>` : (this.hasAttribute('flat') ? '' : `<span class="ex none"></span>`);
    const chk = this.hasAttribute('check') ? `<span class="chk"><svg width="12" height="12" viewBox="0 0 12 12"><path d="M2 6l3 3 5-7" fill="none" stroke="#d01818" stroke-width="2.4"/></svg></span>` : '';
    const empty = this.hasAttribute('dashed') ? `<span class="dash"></span><b class="fx">F[x]</b>` : '';
    const ic = a('icon') ? `<nx-icon name="${a('icon')}" size="${a('is') || 15}"></nx-icon>` : '';
    this.attachShadow({ mode: 'open' }).innerHTML = `<style>
      ${latStyle}
      :host { display:flex; align-items:center; height:20px; box-sizing:border-box; padding-left:${a('ind') || 5}px; border-bottom:1px solid #ececec; white-space:nowrap; color:${a('color') || '#222'}; background:#fff; flex:none; overflow:hidden; }
      :host(:nth-child(even)) { background:#f8f7f3; }
      .ex { position:relative; flex:none; width:8px; height:8px; border:1px solid #8a8a8a; border-radius:2px; background:#f4f4f4; margin-right:6px; }
      .ex::after { content:""; position:absolute; left:100%; top:3px; width:5px; border-top:1px dotted #888; }
      .ex.none { border-color:transparent; background:none; }
      .ex.none::after { border:0; }
      .ex i { position:absolute; left:1px; right:1px; top:3px; height:1px; background:#333; }
      .ex u { position:absolute; top:1px; bottom:1px; left:3px; width:1px; background:#333; }
      .chk { flex:none; width:12px; height:12px; border:1px solid #333; background:#fff; line-height:0; margin-right:2px; }
      .dash { flex:none; width:11px; height:11px; border:1px dashed #444; margin-right:2px; }
      .fx { font:bold 9px "Liberation Mono",monospace; letter-spacing:-.5px; margin-right:2px; color:#222; }
      nx-icon { flex:none; margin-right:1px; }
      .t { margin-left:1px; }
      .m { letter-spacing:0; font-size:10px; }
    </style>${exp}${chk}${empty}${ic}<span class="t">${lat(a('text'))}</span>`;
  }
}

class NxNavigator extends HTMLElement {
  connectedCallback() {
    this.attachShadow({ mode: 'open' }).innerHTML = `<style>
      :host { display:block; flex:1; min-width:0; background:#ecebe9; padding:0 0 0 9px; box-sizing:border-box; }
      .head { display:flex; align-items:center; height:34px; padding-left:5px; font-weight:bold; color:#111; }
      .head span { margin-left:12px; }
      .tree { width:275px; height:149px; box-sizing:border-box; border:1px solid #8c8c8c; background:#fff; display:flex; flex-direction:column; overflow:hidden; }
      .th { display:flex; height:17px; flex:none; background:linear-gradient(#fafafa,#e4e4e4); border-bottom:1px solid #bbb; line-height:16px; box-sizing:border-box; color:#222; }
      .th span { flex:none; padding-left:7px; border-right:1px solid #aaa; box-sizing:border-box; }
      .rows { flex:1; overflow:hidden; display:flex; flex-direction:column; min-height:0; }
      .split { height:1px; margin:6px 12px 0 0; background:#c8c8c8; box-shadow:0 1px 0 #fff; }
      .grip { width:47px; height:4px; margin:0 0 0 113px; background:#bdbdbd; }
      .h2 { display:flex; width:257px; height:24px; margin:0 0 0 1px; align-items:stretch; }
      .h2 b { flex:1; line-height:24px; padding-left:6px; background:linear-gradient(#fafafa,#e2e2e2); border-right:1px solid #aaa; color:#111; }
      .h2 i { width:19px; display:flex; align-items:center; justify-content:center; }
      .sec { display:flex; margin:2px 0 0 1px; }
      .left { width:257px; display:flex; flex-direction:column; height:100px; margin-top:-2px; }
      .well { flex:1; background:#b8b8b8; padding:4px 4px 2px 7px; min-height:0; display:flex; }
      .box { flex:1; border:1px solid #666; background:#fff; overflow:hidden; display:flex; flex-direction:column; }
      nx-scroll[dir=v] { height:106px; margin:-24px 0 0 2px; }
    </style>
    <div class="head"><nx-icon name="tpin" size="13"></nx-icon><span>仿真导航器</span></div>
    <div class="tree">
      <div class="th"><span style="width:161px">名称</span><span style="width:99px">状态</span><span style="border:0;padding-left:0">到</span></div>
      <div class="rows">
        <nx-row ex="+" icon="tfolder" text="15.2.1_fem1_i"></nx-row>
        <nx-row ex="+" check icon="tcube" text="Polygon Geometry"></nx-row>
        <nx-row icon="tgroup" ind="4" text="组"></nx-row>
        <nx-row dashed ind="6" text="Fields"></nx-row>
        <nx-row ex="+" check icon="tcoll2" text="2D Collectors"></nx-row>
        <nx-row ex="+" check icon="tcoll3" text="3D Collectors"></nx-row>
      </div>
      <nx-scroll thumb="85"></nx-scroll>
    </div>
    <div class="split"></div>
    <div class="grip"></div>
    <div class="h2" style="margin-top:1px"><b>仿真文件视图</b><i><svg width="14" height="10" viewBox="0 0 14 10"><path d="M1 9l6-7 6 7" fill="none" stroke="#444" stroke-width="3"/></svg></i></div>
    <div class="sec">
      <div class="left">
        <div class="well"><div class="box">
          <nx-row flat text="Session" ind="2"></nx-row>
          <nx-row ex="−" icon="tsim" is="18" ind="3" text="15.2.1_sim1"></nx-row>
          <nx-row ex="−" icon="tfem" is="16" ind="22" color="#1818a8" text="15.2.1_fem1"></nx-row>
          <nx-row ex="−" icon="tbox" is="16" ind="41" text="15.2.1_fem1_i"></nx-row>
        </div></div>
        <nx-scroll thumb="218"></nx-scroll>
      </div>
      <nx-scroll dir="v" thumb="18"></nx-scroll>
    </div>`;
  }
}

class NxViewport extends HTMLElement {
  connectedCallback() {
    const mesh = [
      'M458 493L523 508 586.5 537 652 560 721 567 793 545',
      'M444 538L509 553 572 583 637.5 605 705 612 764 600',
      'M537.5 462L601 492 666 516 733.5 521 793 508',
      'M578 425L674 465M674 470L748 476 805 463',
      'M601 492L674 467',
      'M678 417L695 424 762 430 823 418',
      'M708 383L695 424 674 467 666 516 652 560 631 628',
      'M774 387L762 430 748 476 733.5 521 721 567 701 628',
      'M537.5 462L523 508 509 553 495 597',
      'M601 492L586.5 537 572 583 557 628',
      'M646 420L674 465',
      'M501 357L535.5 362M580 327L574 340',
      'M925 326L913 371 899 417 884.5 463 870 508 855 553 841.6 598',
      'M860 378L913 371 968 407',
      'M846 423L899 417 954 452',
      'M829 470L884.5 463 939.6 498',
      'M816 515L870 508 925 543',
      'M803 560L855 553 911 588'
    ].map(d => `<path d="${d}"/>`).join('');
    this.attachShadow({ mode: 'open' }).innerHTML = `<style>
      :host { display:block; height:323px; }
      svg { display:block; width:663px; height:323px; }
      text { font:11px "Liberation Sans",sans-serif; fill:#a88a30; }
    </style>
    <svg viewBox="334 305 663 323" preserveAspectRatio="none">
      <defs>
        <linearGradient id="sky" x1="0" y1="0" x2="0" y2="1"><stop offset="0" stop-color="#7fa8ca"/><stop offset=".4" stop-color="#bccdd9"/><stop offset=".72" stop-color="#e2e4e4"/><stop offset="1" stop-color="#ebebea"/></linearGradient>
        <radialGradient id="glow" cx=".5" cy=".5" r=".5"><stop offset="0" stop-color="#52cf14"/><stop offset="1" stop-color="#41bf06"/></radialGradient>
      </defs>
      <rect x="334" y="305" width="663" height="323" fill="url(#sky)"/>
      <path d="M513 312Q560 318 599 333L693 373Q730 384 776 385L701 628H556Q490 590 429 583Z" fill="#41bf06"/>
      <path d="M578 425L646 420 674 465 601 492 537.5 462Z" fill="url(#glow)"/>
      <path d="M776 385L835 371 756 628H701Z" fill="#3bb007"/>
      <path d="M870 335L925 326 982 363 901 628H889Q860 605 837 598L789 605Z" fill="#3fb806"/>
      <g fill="none" stroke="#2a7d20" stroke-width=".9">${mesh}</g>
      <path d="M835 371L870 335 789 605 770 628H756Z" fill="#2f8f06"/>
      <path d="M463 335L513 312 429 583 378 608Z" fill="#369c06"/>
      <path d="M537.5 342L679 321 666 367 525 388Z" fill="#3aad05"/>
      <path d="M679 321L691 373 677.5 417 666 367Z" fill="#369f06"/>
      <path d="M537.5 342L525 388 472 447 488.5 398Z" fill="#369f06"/>
      <path d="M525 388L666 367 677.5 417 578 425 537.5 462 472 447Z" fill="#1b4a00"/>
      <path d="M525 388L578 425" stroke="#2c6a10" fill="none"/>
      <g fill="none" stroke="#e8383a" stroke-width="2.5">
        <path d="M377 609L463 335Q480 312 515 311Q560 315 599 333"/>
        <path d="M693 373Q730 384 776 385Q805 380 835 370Q860 345 870 333Q885 315 903 317Q925 322 982 363L901 628"/>
        <path d="M377 609Q400 590 429 583Q490 585 556 627"/>
        <path d="M770 627L789 605Q800 590 809 590Q830 593 838 598L889 628"/>
      </g>
      <path d="M403 559H436" stroke="#c83018" stroke-width="1.5"/>
      <path d="M403 559L413 527" stroke="#2030c0" stroke-width="1.5"/>
      <path d="M403 559L413 593" stroke="#20c0a0" stroke-width="1.5"/>
      <circle cx="403" cy="559" r="3" fill="#a8a8a8"/>
      <text x="445" y="563">X</text>
      <path d="M641 607L650 578" stroke="#1010d0" stroke-width="1.5"/>
      <path d="M641 607H682" stroke="#c02a10" stroke-width="2"/>
      <text x="652" y="575">ZC</text><text x="688" y="608">XC</text>
      <circle cx="675" cy="483" r="12" fill="none" stroke="#d8f8c8" stroke-width="1"/>
      <path d="M675 466V498M659 482H691" stroke="#fff" stroke-width="3"/>
      <path d="M675 466V498M659 482H691" stroke="#111" stroke-width="1"/>
    </svg>`;
  }
}

class NxDialog extends HTMLElement {
  connectedCallback() {
    this.attachShadow({ mode: 'open' }).innerHTML = `<style>
      :host { display:flex; flex-direction:column; width:256px; height:136px; border-radius:7px 7px 5px 5px; overflow:hidden; background:linear-gradient(#e4e4e4,#c4c4c4); }
      .h { display:flex; align-items:center; height:20px; flex:none; background:linear-gradient(#202020,#0c0c0c); color:#fff; font-weight:bold; font-size:13.5px; padding-left:7px; letter-spacing:.3px; }
      .h nx-arrow { margin-left:auto; border-top-color:#fff; border-width:4px; border-top-width:5px; border-bottom:0; }
      .h .x { margin-left:4px; width:24px; height:100%; border-left:1px solid #777; display:flex; align-items:center; justify-content:center; }
      .g { flex:1; display:grid; grid-template-columns:repeat(8,31px); grid-auto-rows:37px; padding:0 0 0 3px;
        background:repeating-linear-gradient(transparent 0 34px,#aeaeae 34px,#f4f4f4 35px,transparent 36px 37px); }
      ::slotted(nx-btn) { height:34px; }
      .f { height:9px; flex:none; background:linear-gradient(#333,#111); }
    </style>
    <div class="h">${this.getAttribute('text')}<nx-arrow></nx-arrow><span class="x"><svg width="14" height="14" viewBox="0 0 14 14"><path d="M2 2l10 10M12 2L2 12" stroke="#fff" stroke-width="3.4"/></svg></span></div>
    <div class="g"><slot></slot></div>
    <div class="f"></div>`;
  }
}

class NxWatermark extends HTMLElement {
  connectedCallback() {
    this.attachShadow({ mode: 'open' }).innerHTML = `<style>
      :host { display:block; position:absolute; right:2px; bottom:2px; font-size:14px; line-height:15px; letter-spacing:2px; color:#18d848; text-shadow:0 0 1px #fff,0 0 2px #fff,0 0 3px #ddd; }
    </style>${this.getAttribute('text')}`;
  }
}

const defs = {
  'nx-icon': NxIcon, 'nx-window': NxWindow, 'nx-titlebar': NxTitlebar, 'nx-menubar': NxMenubar, 'nx-toolbar': NxToolbar,
  'nx-grip': NxGrip, 'nx-sep': NxSep, 'nx-arrow': NxArrow, 'nx-more': NxMore, 'nx-btn': NxBtn, 'nx-tool': NxTool,
  'nx-combo': NxCombo, 'nx-selbar': NxSelbar, 'nx-cuebar': NxCuebar, 'nx-band': NxBand, 'nx-main': NxMain, 'nx-tabs': NxTabs,
  'nx-scroll': NxScroll, 'nx-row': NxRow, 'nx-navigator': NxNavigator, 'nx-viewport': NxViewport, 'nx-dialog': NxDialog,
  'nx-watermark': NxWatermark
};
Object.keys(defs).forEach(k => customElements.define(k, defs[k]));
</script>
</body>
</html>
